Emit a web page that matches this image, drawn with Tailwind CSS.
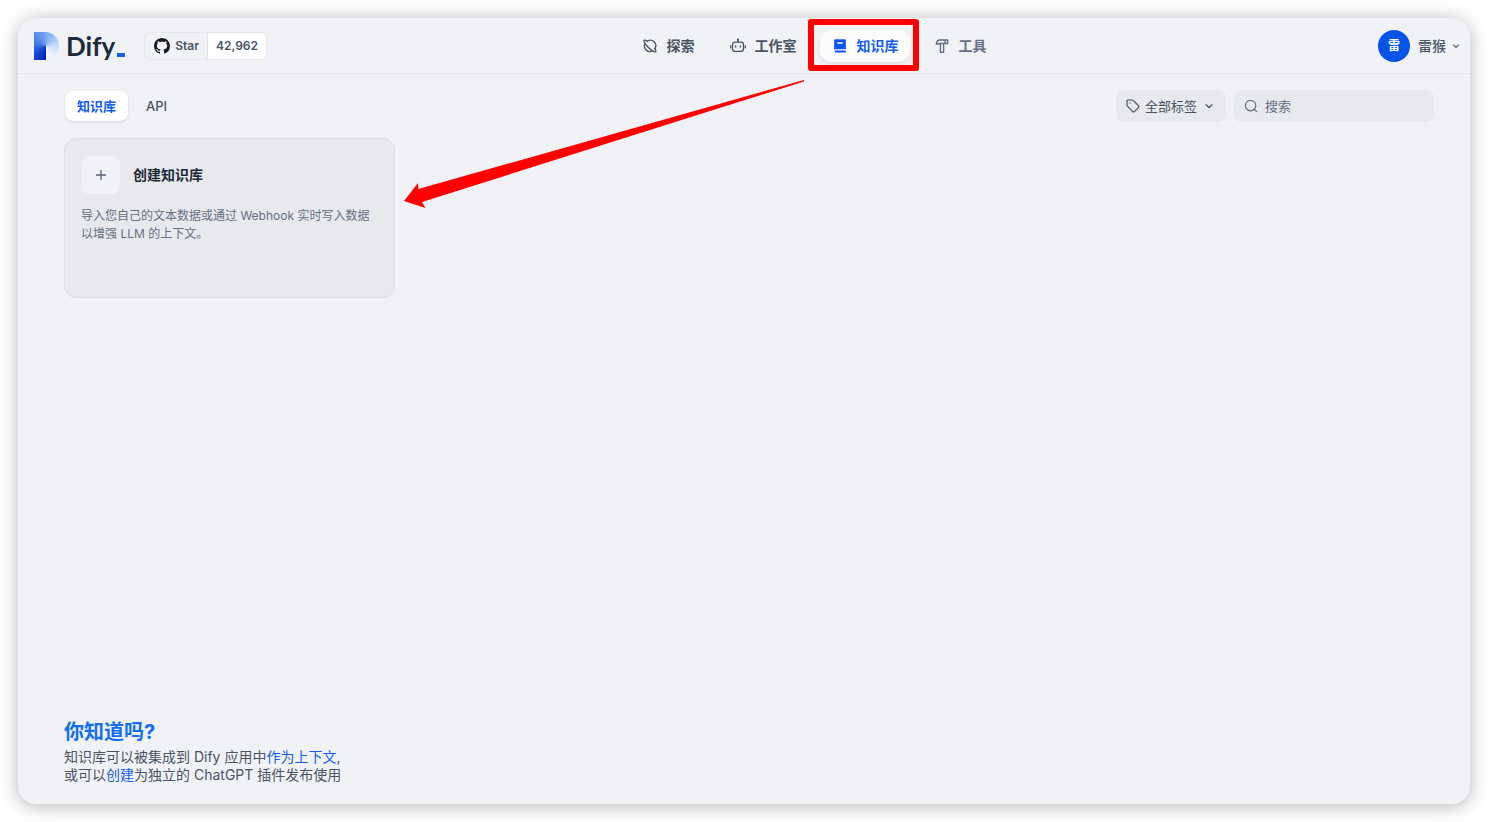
<!DOCTYPE html>
<html lang="zh-CN">
<head>
<meta charset="utf-8">
<meta name="viewport" content="width=device-width, initial-scale=1">
<title>知识库 - Dify</title>
<script src="https://cdn.jsdelivr.net/npm/@tailwindcss/browser@4"></script>
</head>
<body class="relative bg-white font-['Inter','Noto_Sans_CJK_SC',sans-serif] text-sm text-[#495464]">
<div class="flex min-h-screen p-[18px]">
  <div class="flex flex-1 flex-col rounded-[18px] bg-[#f0f2f6] shadow-[0_2px_18px_rgba(0,0,0,0.3)]">
    <header class="flex h-14 items-center justify-between border-b border-[#e4e6ea] pr-2 pl-4">
      <div class="flex items-center">
        <a href="#" class="flex items-center" aria-label="Dify">
          <span class="h-7 w-[25px] rounded-r-[14px] bg-[conic-gradient(from_180deg_at_48%_50%,#0022b4_0%,#1450d8_16%,#3f78e4_28%,#6d9cf0_45%,#86aff5_54%,#b9d3fb_70%,#dfebff_85%,#f8fbff_100%)]"></span>
          <span class="ml-[7px] font-['Lato'] text-[26px] leading-8 font-bold text-[#1d2a3b]">Dify</span>
          <span class="mt-[18px] ml-[2px] h-1 w-2 bg-[#155eef]"></span>
        </a>
        <a href="#" class="ml-[19px] flex h-[28px] overflow-hidden rounded-md border border-[#e6e8ec] text-xs leading-[26px] font-semibold">
          <span class="flex items-center gap-[5px] border-r border-[#e4e6ea] pr-2 pl-[9px]">
            <svg class="size-4" viewBox="0 0 16 16" fill="#1b1f24" aria-hidden="true"><path d="M8 0C3.58 0 0 3.58 0 8c0 3.54 2.29 6.53 5.47 7.59.4.07.55-.17.55-.38 0-.19-.01-.82-.01-1.49-2.01.37-2.53-.49-2.69-.94-.09-.23-.48-.94-.82-1.13-.28-.15-.68-.52-.01-.53.63-.01 1.08.58 1.23.82.72 1.21 1.87.87 2.33.66.07-.52.28-.87.51-1.07-1.78-.2-3.64-.89-3.64-3.95 0-.87.31-1.59.82-2.15-.08-.2-.36-1.02.08-2.12 0 0 .67-.21 2.2.82.64-.18 1.32-.27 2-.27s1.36.09 2 .27c1.53-1.04 2.2-.82 2.2-.82.44 1.1.16 1.92.08 2.12.51.56.82 1.27.82 2.15 0 3.07-1.87 3.75-3.65 3.95.29.25.54.73.54 1.48 0 1.07-.01 1.93-.01 2.2 0 .21.15.46.55.38A8.01 8.01 0 0 0 16 8c0-4.42-3.58-8-8-8z"/></svg>
            Star
          </span>
          <span class="bg-white px-2">42,962</span>
        </a>
      </div>
      <nav class="flex items-center gap-3 font-bold">
        <a href="#" class="flex h-8 items-center gap-2 px-3">
          <svg class="size-4" viewBox="0 0 16 16" fill="none" stroke="#495464" stroke-width="1.4" stroke-linecap="round" stroke-linejoin="round" aria-hidden="true"><path d="M5.2 3.300A5.400 5.400 0 0 1 12.900 10.600M10.700 12.700A5.400 5.400 0 0 1 3.200 5.400"/><path d="M5.200 3.300C3.700 2.300 2.700 1.900 2.300 2.300c-.9.900 1.300 4.300 4.200 7.200s6.300 5.100 7.200 4.200c.4-.4.100-1.500-.8-3.100"/></svg>
          探索
        </a>
        <a href="#" class="flex h-8 items-center gap-2 px-3">
          <svg class="size-4" viewBox="0 0 16 16" fill="none" stroke="#495464" stroke-width="1.3" stroke-linecap="round" stroke-linejoin="round" aria-hidden="true"><rect x="2.500" y="4.200" width="11" height="9.200" rx="2.400"/><path d="M8 4V1.600M.7 7.800v2M15.300 7.800v2M5.700 8v1M10.300 8v1"/><circle cx="8" cy="1.700" r=".5" fill="#495464"/></svg>
          工作室
        </a>
        <a href="#" aria-current="page" class="relative flex h-8 items-center gap-2 rounded-xl bg-[#fcfcfd] px-3 text-[#155eef] shadow-md shadow-black/5">
          <svg class="size-4" viewBox="0 0 16 16" aria-hidden="true"><path fill="#0f55ee" fill-rule="evenodd" d="M3.300 1.300h9.400a1.200 1.200 0 0 1 1.200 1.200v8.700H4a2 2 0 0 0-1.900.9V2.500a1.200 1.200 0 0 1 1.200-1.200zM5.300 4.300v1.400h5.400V4.300z"/><path fill="#0f55ee" d="M3.800 12.600h10.100v2H3.800a1 1 0 0 1 0-2z"/></svg>
          知识库
          <span class="pointer-events-none absolute -top-[11px] -right-[9px] -bottom-[9px] -left-3 rounded-[3px] border-6 border-[#ff0000]"></span>
        </a>
        <a href="#" class="flex h-8 items-center gap-2 px-3 text-[#667085]">
          <svg class="size-4" viewBox="0 0 16 16" fill="none" stroke="#667085" stroke-width="1.400" stroke-linejoin="round" stroke-linecap="round" aria-hidden="true"><path d="M6.400 5.500v8.700h3.200V5.500M6.400 5.500H5.300c-.9 0-1.700.2-3 .8.100-2.500 1.300-4.300 3.500-4.300h7.900v3.500H6.400zM11 2v3.400"/></svg>
          工具
        </a>
      </nav>
      <button type="button" class="flex items-center pl-4 font-medium">
        <span class="mr-2 flex size-8 items-center justify-center rounded-full bg-[#0454ea] text-xs font-bold text-white">雷</span>
        雷猴
        <svg class="ml-1 size-3" viewBox="0 0 12 12" fill="none" stroke="#667085" stroke-width="1.200" stroke-linecap="round" stroke-linejoin="round" aria-hidden="true"><path d="M3.500 5 6 7.500 8.500 5"/></svg>
      </button>
    </header>

    <main class="flex-1 pt-4 pr-9 pl-[46px]">
      <div class="flex items-center justify-between text-[13px]">
        <div class="flex items-center gap-[6px] pl-px">
          <button type="button" class="h-[30px] rounded-lg bg-white px-3 font-bold text-[#155eef] shadow-sm shadow-black/10">知识库</button>
          <button type="button" class="h-[30px] rounded-lg px-3 font-medium">API</button>
        </div>
        <div class="flex items-center gap-2">
          <button type="button" class="flex h-8 w-[110px] items-center rounded-lg bg-[#e7e9ed] pl-[9px]">
            <svg class="mr-1 size-4" viewBox="0 0 16 16" fill="none" stroke="#495464" stroke-width="1.200" stroke-linejoin="round" aria-hidden="true"><path d="M2 3.100c0-.7.400-1.100 1.100-1.100h4c.4 0 .7.100 1 .4l5.400 5.300c.6.600.6 1.100.1 1.600l-4.200 4.300c-.6.600-1.100.5-1.700 0L2.400 8.200c-.3-.3-.4-.6-.4-1z"/><circle cx="5" cy="5" r=".7" fill="#495464" stroke="none"/></svg>
            全部标签
            <svg class="ml-[6px] size-3" viewBox="0 0 12 12" fill="none" stroke="#495464" stroke-width="1.200" stroke-linecap="round" stroke-linejoin="round" aria-hidden="true"><path d="M3 4.700 6 7.500 9 4.700"/></svg>
          </button>
          <label class="flex h-8 w-[200px] items-center gap-[6px] rounded-lg bg-[#e7e9ed] px-[9px]">
            <svg class="size-4 shrink-0" viewBox="0 0 16 16" fill="none" stroke="#667085" stroke-width="1.200" stroke-linecap="round" aria-hidden="true"><circle cx="7.600" cy="7.600" r="5.200"/><path d="m11.500 11.500 2.200 2.200"/></svg>
            <input type="text" aria-label="搜索" placeholder="搜索" class="w-full min-w-0 bg-transparent outline-none placeholder:text-[#667085]">
          </label>
        </div>
      </div>

      <div class="mt-4 grid grid-cols-4 gap-[15px]">
        <a href="#" class="h-40 rounded-xl border border-[#dcdee3] bg-[#e7e9ed] p-4">
          <span class="flex items-center gap-3">
            <span class="flex size-10 items-center justify-center rounded-lg border border-[#e7e9ed] bg-[#f0f2f6]">
              <svg class="size-4" viewBox="0 0 16 16" fill="none" stroke="#5b6678" stroke-width="1.300" stroke-linecap="round" aria-hidden="true"><path d="M8 3.500v9M3.500 8h9"/></svg>
            </span>
            <span class="font-bold text-[#1d2939]">创建知识库</span>
          </span>
          <span class="mt-3 block text-xs leading-[18px] text-[#667085]">导入您自己的文本数据或通过 Webhook 实时写入数据以增强 LLM 的上下文。</span>
        </a>
      </div>
    </main>

    <footer class="pr-9 pb-5 pl-[46px]">
      <h3 class="text-xl leading-7 font-bold text-[#116df2]">你知道吗?</h3>
      <p class="mt-[2px] leading-[18px]">知识库可以被集成到 Dify 应用中<a href="#" class="text-[#155eef]">作为上下文</a>,<br>或可以<a href="#" class="text-[#155eef]">创建</a>为独立的 ChatGPT 插件发布使用</p>
    </footer>
  </div>
</div>

<svg class="pointer-events-none absolute top-20 left-[404px] h-32 w-[400px]" viewBox="0 0 400 128" fill="#ff0000" aria-hidden="true"><path d="M0 121 14 103l.4 6L400 0v1.400L18 122l3.500 6z"/></svg>
</body>
</html>
